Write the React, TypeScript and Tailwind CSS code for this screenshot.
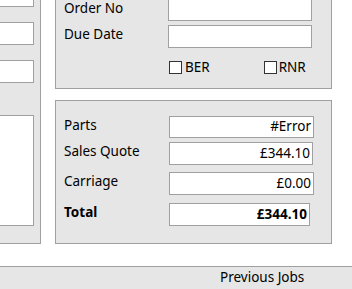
import React from "react";

const B = "border-[#a0a0a0]";

function Field({ w, h, value, bold }: { w: number; h: number; value?: string; bold?: boolean }) {
  return (
    <div
      className={`border ${B} bg-white flex items-center justify-end pr-[2px] ${bold ? "font-bold" : ""}`}
      style={{ width: w, height: h }}
    >
      {value}
    </div>
  );
}

export default function App() {
  return (
    <div
      className="w-[352px] h-[289px] bg-white overflow-hidden flex flex-col text-[13.5px] leading-none text-black"
      style={{ fontFamily: '"Noto Sans", "Open Sans", sans-serif' }}
    >
      <div className="h-[266px] flex flex-row shrink-0">
        {/* left panel */}
        <div className={`w-[41px] h-[244px] bg-[#e6e6e6] border-r border-b ${B} flex flex-col shrink-0`}>
          <div className={`w-[34px] h-[7px] bg-white border-r border-b ${B}`} />
          <div className={`w-[34px] h-[23px] mt-[15px] bg-white border-y border-r ${B}`} />
          <div className={`w-[34px] h-[23px] mt-[15px] bg-white border-y border-r ${B}`} />
          <div className={`w-[34px] h-[111px] mt-[32px] bg-white border-y border-r ${B}`} />
        </div>
        {/* right column */}
        <div className="ml-[14px] w-[277px] flex flex-col shrink-0">
          <div className={`h-[89px] bg-[#e6e6e6] border-x border-b ${B} pl-[8px] flex flex-col`}>
            <div className="flex items-center mt-[-2px]">
              <span className="w-[104px] mt-[-2px]">Order No</span>
              <Field w={144} h={23} />
            </div>
            <div className="flex items-center mt-[4px]">
              <span className="w-[104px] mt-[-3px]">Due Date</span>
              <Field w={144} h={23} />
            </div>
            <div className="flex items-center mt-[13px] ml-[105px]">
              <div className="w-[13px] h-[13px] border border-[#333] bg-white" />
              <span className="ml-[3px]">BER</span>
              <div className="w-[13px] h-[13px] border border-[#333] bg-white ml-[54px]" />
              <span className="ml-[2px]">RNR</span>
            </div>
          </div>
          <div className={`mt-[11px] h-[144px] bg-[#e6e6e6] border ${B} pl-[8px] pt-[15px] flex flex-col`}>
            <div className="flex items-center">
              <span className="w-[105px] mt-[-2px]">Parts</span>
              <Field w={145} h={22} value="#Error" />
            </div>
            <div className="flex items-center mt-[4px]">
              <span className="w-[105px] mt-[-3px]">Sales Quote</span>
              <Field w={144} h={23} value="£344.10" />
            </div>
            <div className="flex items-center mt-[7px]">
              <span className="w-[105px] mt-[-3px]">Carriage</span>
              <Field w={145} h={23} value="£0.00" />
            </div>
            <div className="flex items-center mt-[8px] font-bold">
              <span className="w-[105px] mt-[-3px]">Total</span>
              <Field w={141} h={23} value="£344.10" bold />
            </div>
          </div>
        </div>
      </div>
      <div className={`flex-1 bg-[#e6e6e6] border-t ${B} flex items-center`}>
        <span className="ml-[220px] mt-[-1px]">Previous Jobs</span>
      </div>
    </div>
  );
}
